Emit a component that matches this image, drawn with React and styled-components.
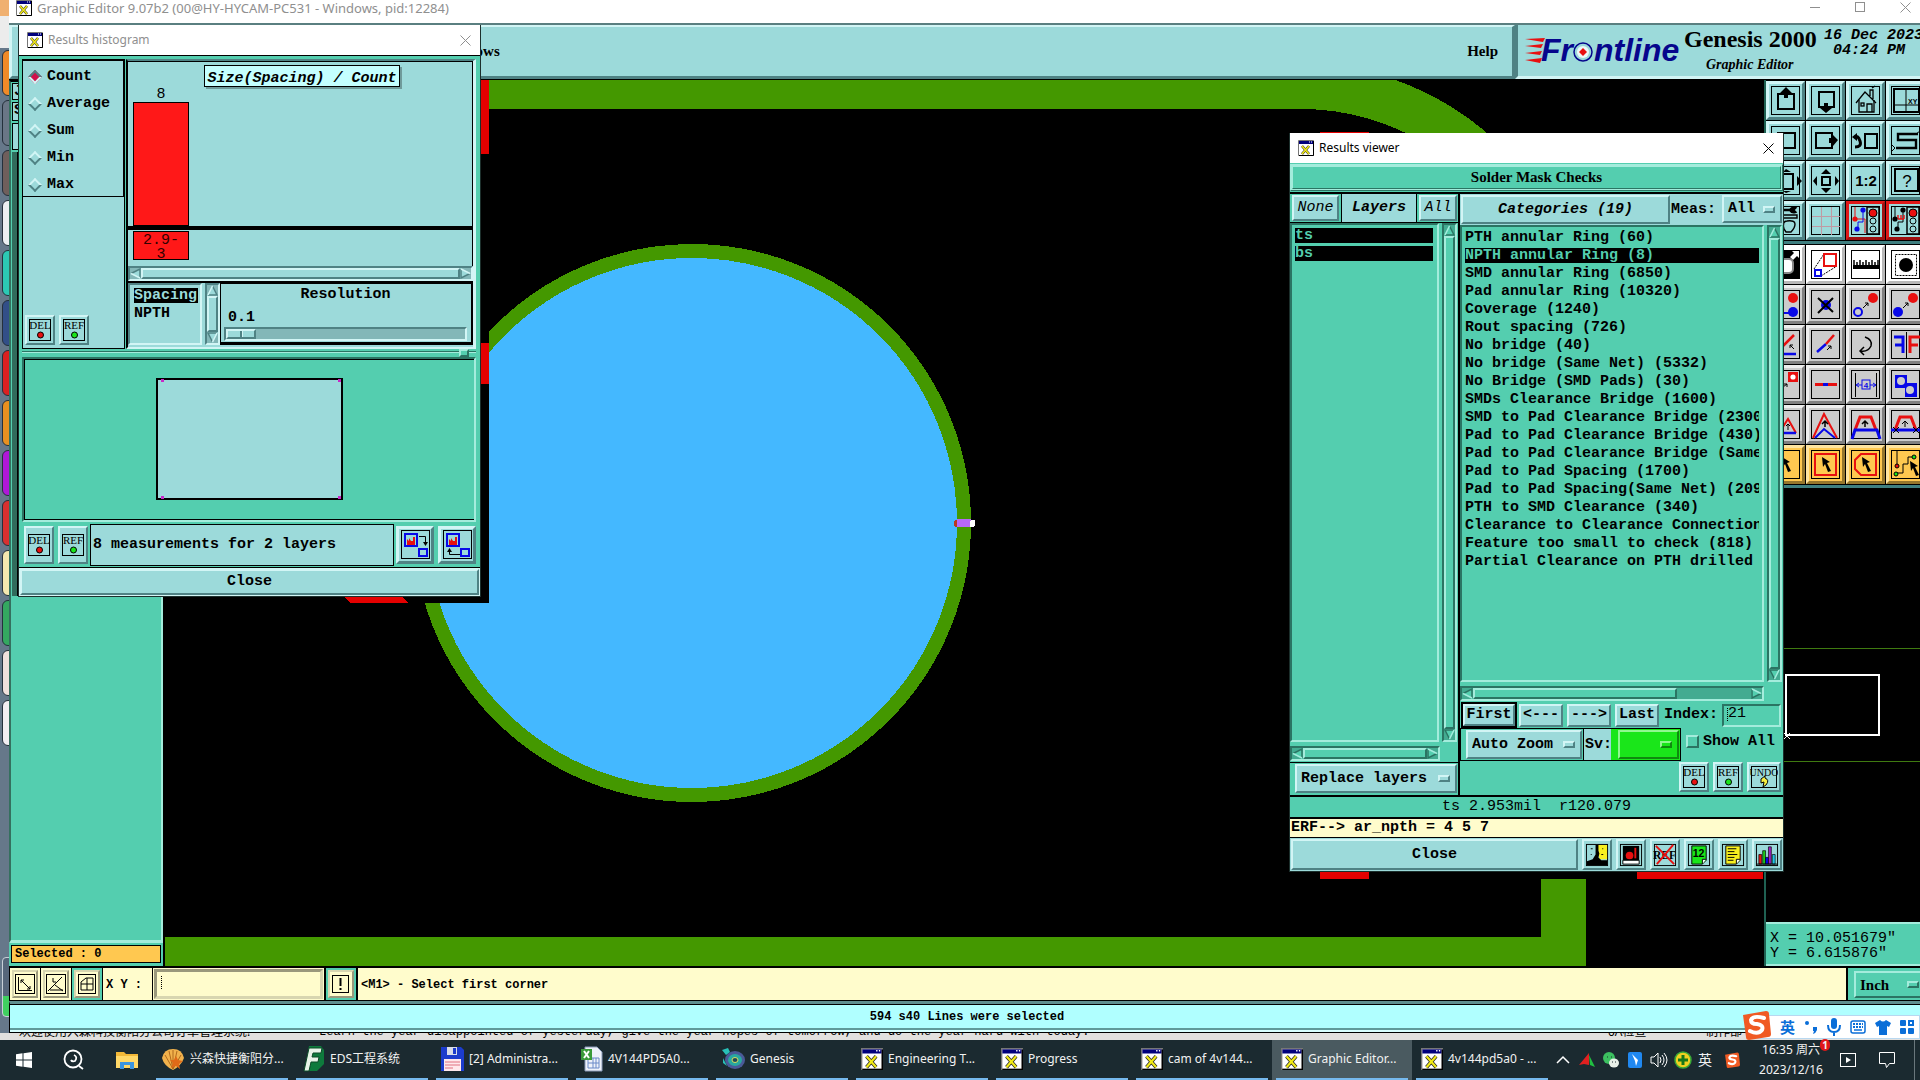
import React, { useState } from 'react';
import styled, { createGlobalStyle, css } from 'styled-components';

// Palette
const TEAL = '#54ceaf';
const TEAL_LT = '#a4ecdc';
const TEAL_DK = '#2b7463';
const AQUA = '#9cdada';
const AQUA_LT = '#d2f5f5';
const AQUA_DK = '#4f8284';
const CREAM = '#fffccc';

const MONO = '"Liberation Mono", monospace';
const SERIF = '"Liberation Serif", serif';
const UI = '"Noto Sans", "Noto Sans CJK SC", sans-serif';

const GlobalStyle = createGlobalStyle`
  *, *::before, *::after { box-sizing: border-box; }
  body { margin: 0; overflow: hidden; background: #5f6f80; }
  button, input, select { margin: 0; padding: 0; border: 0; border-radius: 0; font: inherit; color: inherit; background: none; }
  ul { margin: 0; padding: 0; list-style: none; }
  svg { display: block; }
`;

const tones = {
  teal: [TEAL, TEAL_LT, TEAL_DK],
  aqua: [AQUA, AQUA_LT, AQUA_DK],
  cream: [CREAM, '#d8d6b0', '#9a987c'],
  green: ['#1ae61a', '#90f890', '#0f8a0f'],
  white: ['#ffffff', '#ffffff', '#b8b8b8'],
  gray: ['#cccccc', '#eeeeee', '#808080'],
  orange: ['#ffc850', '#ffe4a0', '#96762c'],
  alert: [AQUA, '#e01818', '#a01010'],
};

const raised = css`
  background: ${(p) => tones[p.$tone || 'aqua'][0]};
  border: ${(p) => p.$bw || 2}px solid;
  border-color: ${(p) => {
    const [, lt, dk] = tones[p.$tone || 'aqua'];
    return `${lt} ${dk} ${dk} ${lt}`;
  }};
`;

const sunken = css`
  background: ${(p) => tones[p.$tone || 'aqua'][0]};
  border: 2px solid;
  border-color: ${(p) => {
    const [, lt, dk] = tones[p.$tone || 'aqua'];
    return `${dk} ${lt} ${lt} ${dk}`;
  }};
`;

// dotted insertion mark of an unfocused text field
const insertionMark = css`
  background-image: repeating-linear-gradient(#000 0 1px, transparent 1px 2px);
  background-size: 1px 14px;
  background-repeat: no-repeat;
`;

// ---------- Desktop ----------

const Desktop = styled.div`
  position: relative;
  display: flex;
  flex-direction: column;
  height: 100vh;
  overflow: hidden;
  font: bold 15px/18px ${MONO};
  color: #000;
`;

const Workspace = styled.div`
  flex: 1;
  display: flex;
  min-height: 0;
`;

const Dock = styled.div`
  width: 9px;
  display: flex;
  flex-direction: column;
  overflow: hidden;
  background: #66788a;
`;

const DockTop = styled.div`
  height: 48px;
  background: #ececec;
  border-top: 16px solid #f0b070;
`;

const DockIcon = styled.div`
  flex: none;
  height: 46px;
  margin: 2px 0 2px 2px;
  width: 20px;
  border: 1px solid #25303c;
  border-radius: 6px 0 0 6px;
  background: ${(p) => p.$color};
`;

const DockGauge = styled.div`
  margin: auto 0 16px 2px;
  height: 60px;
  width: 14px;
  border: 1px solid #c8d0d8;
  border-radius: 4px;
  background: linear-gradient(#56667a 66%, #40d060 66%);
`;

const MainWindow = styled.main`
  flex: 1;
  min-width: 0;
  display: flex;
  flex-direction: column;
  overflow: hidden;
  background: ${TEAL};
`;

const TitleBar = styled.header`
  display: flex;
  align-items: center;
  gap: 5px;
  height: ${(p) => p.$h}px;
  padding: 0 7px 0 8px;
  background: #fff;
  color: ${(p) => (p.$active ? '#000' : '#8f8f8f')};
  font: 12px/18px ${UI};
  white-space: nowrap;
`;

const MainTitle = styled(TitleBar)`
  padding: 0 0 8px 7px;
  font-size: 13px;

  button:last-child {
    margin-left: 5px;
  }
`;

const TitleText = styled.span`
  flex: 1;
`;

const CaptionButton = styled.button`
  width: ${(p) => p.$w || 16}px;
  display: flex;
  justify-content: center;
  color: inherit;
`;

const MenuRow = styled.div`
  display: flex;
  height: 56px;
  border-top: 2px solid #5a7f80;
  background: ${AQUA};
`;

const MenuBar = styled.nav`
  flex: 1;
  ${raised}
  border-width: 2px 3px 3px;
  display: flex;
  align-items: center;
  justify-content: space-between;
  padding: 0 14px 1px 428px;
  font: bold 15px/18px ${SERIF};
`;

const Brand = styled.div`
  width: 405px;
  flex: none;
  display: flex;
  border-left: 3px solid ${AQUA_DK};
  border-bottom: 3px solid ${AQUA_LT};
  padding-left: 4px;
  overflow: hidden;
`;

const ProductName = styled.div`
  width: 140px;
  flex: none;
  font: bold 24px/28px ${SERIF};
  white-space: nowrap;

  em {
    display: block;
    padding-left: 22px;
    font-size: 14px;
    line-height: 24px;
  }
`;

const Clock = styled.div`
  padding-top: 3px;
  font: italic bold 15px/15px ${MONO};
  white-space: pre;
`;

const Body = styled.div`
  flex: 1;
  min-height: 0;
  display: flex;
  border-top: 1px solid #000;
`;

const LayerPanel = styled.aside`
  width: 156px;
  display: flex;
  flex-direction: column;
  border-right: 2px solid #000;
  background: ${TEAL};
`;

const LayerArea = styled.div`
  flex: 1;
  border: solid;
  border-width: 2px 2px 3px;
  border-color: #000 ${TEAL_LT} ${TEAL_LT} #35705f;
  padding: 1px;
`;

const LayerBox = styled.div`
  width: 130px;
  height: ${(p) => p.$h}px;
  margin-bottom: 2px;
  padding-left: 1px;
  border: 1px solid #000;
  background: ${AQUA};
  line-height: 16px;
`;

const LayerWell = styled.div`
  width: 130px;
  height: 444px;
  border-left: 5px solid #316b5c;
  background: #000;
`;

const SelectedCount = styled.div`
  margin: 2px 2px 3px;
  height: 18px;
  padding-left: 3px;
  border: 1px solid #000;
  background: #ffc850;
  font: bold 12px/16px ${MONO};
`;

const Board = styled.div`
  flex: 1;
  min-width: 0;
  background: #000;
`;

const ToolPanel = styled.aside`
  width: 156px;
  flex: none;
  display: flex;
  flex-direction: column;
  border-left: 2px solid #1f6152;
  background: #000;
  overflow: hidden;
`;

const ToolGrid = styled.div`
  display: grid;
  grid-template-columns: repeat(4, 40px);
  grid-auto-rows: 40px;
  padding-top: 1px;
  border-bottom: 3px solid #3f7f80;
`;

const ToolButton = styled.button`
  ${raised}
  width: 39px;
  height: 39px;
`;

const Overview = styled.div`
  flex: 1;
`;

const Coordinates = styled.div`
  height: 44px;
  padding: 7px 4px 0;
  background: ${TEAL};
  border-top: 2px solid ${TEAL_LT};
  border-bottom: 2px solid ${TEAL_LT};
  font-weight: normal;
  line-height: 15px;
  white-space: pre;
`;

const CommandRow = styled.div`
  display: flex;
  height: 35px;
  border: solid #000;
  border-width: 2px 0 1px 1px;
  background: ${CREAM};
  font: bold 12px/18px ${MONO};
`;

const CommandTool = styled.div`
  width: 31px;
  flex: none;
  padding: 2px;
  border-right: 1px solid #000;
  background: ${(p) => (p.$on ? TEAL : CREAM)};
`;

const CommandButton = styled.button`
  ${raised}
  width: 26px;
  height: 28px;
  display: grid;
  place-items: center;
`;

const CommandLabel = styled.label`
  width: 49px;
  padding-left: 3px;
  line-height: 34px;
`;

const CommandField = styled.div`
  width: 174px;
  display: flex;
  padding: 1px;
  border: solid #000;
  border-width: 0 2px 0 1px;
`;

const CommandInput = styled.input`
  ${sunken}
  ${insertionMark}
  background-position: 4px 4px;
  border-width: 3px;
  flex: 1;
  min-width: 0;
  padding: 0 6px;
`;

const CommandHint = styled.div`
  flex: 1;
  padding-left: 3px;
  border: solid #000;
  border-width: 0 2px 0 1px;
  line-height: 34px;
`;

const UnitBox = styled.div`
  width: 72px;
  flex: none;
  background: ${TEAL};
  padding: 3px 0 2px 6px;
  overflow: hidden;
  font: bold 15px/18px ${SERIF};
`;

const StatusRow = styled.div`
  height: 32px;
  border: solid #000;
  border-width: 3px 0 1px 1px;
  border-top-color: #5f8f90;
  padding-bottom: 2px;
  background: #d8ffff;

  div {
    height: 26px;
    border: solid;
    border-width: 1px 0 2px;
    border-color: #000 #000 #5f9a9a;
    background: #b0ffff;
    text-align: center;
    padding-left: 4px;
    font: bold 12px/25px ${MONO};
  }
`;

const Ticker = styled.div`
  height: 7px;
  display: flex;
  padding-left: 19px;
  overflow: hidden;
  background: #e2e0de;
  font: 12px/18px ${UI};
  white-space: nowrap;

  span {
    margin-top: -10px;
  }
  span:nth-child(1) { width: 300px; }
  span:nth-child(2) { flex: 1; font-family: ${MONO}; }
  span:nth-child(3) { width: 98px; }
  span:nth-child(4) { width: 214px; }
`;

// ---------- Shared controls ----------

const FloatingWindow = styled.section`
  position: absolute;
  left: ${(p) => p.$x}px;
  top: ${(p) => p.$y}px;
  width: ${(p) => p.$w}px;
  display: flex;
  flex-direction: column;
  background: ${TEAL};
  border: solid #1c2f2c;
  border-width: 0 1px 1px;
`;

const PushButton = styled.button`
  ${raised}
  flex: ${(p) => (p.$w ? 'none' : '1')};
  width: ${(p) => (p.$w ? `${p.$w}px` : 'auto')};
  height: ${(p) => p.$h}px;
  font-style: ${(p) => (p.$italic ? 'italic' : 'normal')};
  font-weight: ${(p) => (p.$light ? 'normal' : 'bold')};
  outline: ${(p) => (p.$default ? '2px solid #000' : 'none')};
  text-align: center;
  white-space: pre;
`;

const MenuFrame = styled.span`
  ${raised}
  display: flex;
  align-items: center;
  width: ${(p) => p.$w}px;
  height: ${(p) => p.$h}px;
  padding: 0 5px 0 4px;

  select {
    appearance: none;
    flex: 1;
    min-width: 0;
    outline: none;
  }
  &::after {
    content: '';
    width: 12px;
    height: 7px;
    border: 2px solid;
    border-color: ${(p) => {
      const [, lt, dk] = tones[p.$tone || 'aqua'];
      return `${lt} ${dk} ${dk} ${lt}`;
    }};
  }
`;

const OptionMenu = ({ label, options, ...rest }) => (
  <MenuFrame {...rest}>
    <select aria-label={label}>
      {options.map((o) => (
        <option key={o}>{o}</option>
      ))}
    </select>
  </MenuFrame>
);

const Track = styled.div`
  ${sunken}
  background: ${(p) => (p.$tone === 'teal' ? '#43ab91' : '#83b7b8')};
  display: flex;
  flex-direction: ${(p) => (p.$vertical ? 'column' : 'row')};
  ${(p) => (p.$vertical ? 'width: 15px;' : 'height: 15px;')}
  flex: ${(p) => (p.$fill ? '1' : 'none')};
  min-width: 0;
`;

const Thumb = styled.div`
  ${raised}
  flex: ${(p) => p.$size};
`;

const Rest = styled.div`
  flex: ${(p) => p.$size};
`;

const Arrow = ({ dir, tone = 'aqua' }) => {
  const [, lt, dk] = tones[tone];
  const turn = { up: 0, right: 90, down: 180, left: 270 }[dir];
  return (
    <svg width="11" height="11" viewBox="0 0 11 11" style={{ flex: 'none' }}>
      <g transform={`rotate(${turn} 5.5 5.5)`}>
        <path d="M5.5 0 L11 11 H0 Z" fill={tones[tone][0]} />
        <path d="M5.5 1 L10 10 H1" fill="none" stroke={dk} strokeWidth="1.5" />
        <path d="M1 10 L5.5 1" fill="none" stroke={lt} strokeWidth="1.5" />
      </g>
    </svg>
  );
};

const ScrollBar = ({ vertical, tone, size = 1, fill }) => (
  <Track $vertical={vertical} $tone={tone} $fill={fill}>
    <Arrow dir={vertical ? 'up' : 'left'} tone={tone} />
    <Thumb $tone={tone} $size={size} />
    {size < 1 && <Rest $size={1 - size} />}
    <Arrow dir={vertical ? 'down' : 'right'} tone={tone} />
  </Track>
);

const XIcon = ({ size = 16 }) => (
  <svg width={size} height={size} viewBox="0 0 16 16">
    <path d="M.5 .5h15v15h-15z" fill="#fff" stroke="#777" />
    <path d="M1 1h14v3H1z" fill="#00007c" />
    <path d="M11 2h1M13 2h1" stroke="#fff" />
    <path d="M4 6l7 8M11 6l-7 8" stroke="#222" strokeWidth="2.6" />
    <path d="M4 6l7 8M11 6l-7 8" stroke="#f2ea18" strokeWidth="1.6" />
    <path d="M15.5 1v14.5H1" fill="none" stroke="#000" />
  </svg>
);

const CloseGlyph = () => (
  <svg width="11" height="11" viewBox="0 0 11 11">
    <path d="M.5.5l10 10M10.5.5l-10 10" stroke="currentColor" />
  </svg>
);

const TagButton = styled.button`
  ${raised}
  width: ${(p) => p.$w || 30}px;
  height: ${(p) => p.$h || 30}px;
  display: grid;
  place-items: center;
`;

const Tag = ({ text, color, h, w = 30 }) => (
  <TagButton $h={h} $w={w} aria-label={text}>
    <svg width={w - 6} height="24" viewBox={`0 0 ${w - 6} 24`}>
      <rect x="1.5" y="1.5" width={w - 9} height="21" fill={AQUA} stroke="#000" />
      <text x={(w - 6) / 2} y="11" textAnchor="middle" fontFamily="Liberation Serif" fontSize={w > 30 ? 10 : 11} fontWeight="normal">
        {text}
      </text>
      {color ? (
        <circle cx="12.5" cy="17" r="3" fill={color} stroke="#000" />
      ) : (
        <path d="M11 14l4-3v2q5 2 1 7l-3 2 1-5-3 1z" fill="#f6ee40" stroke="#000" />
      )}
    </svg>
  </TagButton>
);

// ---------- Tool icons (39 x 39 cell coordinates) ----------

const RED = '#e81010';
const BLUE = '#0808e8';
const line = { fill: 'none', stroke: '#000', strokeWidth: 2 };

const Cursor = ({ x, y }) => (
  <path transform={`translate(${x} ${y})`} d="M0 0l8 5-3 1 4 8-3 1-3-8-2 3z" fill="#000" />
);

const Lights = () => (
  <>
    <rect x="21" y="6" width="12" height="27" {...line} strokeWidth="1.5" />
    <circle cx="27" cy="12" r="4" fill={RED} stroke="#000" />
    <circle cx="27" cy="20" r="3" fill="none" stroke="#000" />
    <circle cx="27" cy="28" r="3" fill="none" stroke="#000" />
  </>
);

const navIcons = [
  <><rect x="12" y="13" width="16" height="15" {...line} /><path d="M20 6l6 6-2 2h-2v3h-4v-3h-2l-2-2z" /></>,
  <><rect x="13" y="11" width="15" height="15" {...line} /><path d="M20 32l6-5-2-2h-2v-3h-4v3h-2l-2 2z" /></>,
  <g fill="none" stroke="#000" strokeWidth="1.3"><path d="M10 22l9-11 11 11M24 15V9h3v9M26 7l3-2" /><path d="M13 19v12h15V19M21 31v-8h5v8" /><rect x="15" y="22" width="3" height="3" /></g>,
  <><rect x="8" y="8" width="25" height="23" {...line} /><path d="M20 8v23M8 24h25" fill="none" stroke="#000" /><text x="22" y="23" fontSize="7" fontFamily="Liberation Sans">XY</text></>,
  <rect x="12" y="12" width="17" height="15" {...line} />,
  <><rect x="10" y="12" width="16" height="15" {...line} /><path d="M32 19l-5-5v3h-4v5h4v3z" /></>,
  <><rect x="19" y="13" width="12" height="14" {...line} /><path d="M9 26q7 0 5-6t-5-4" {...line} strokeWidth="3" /><path d="M6 16l5-4v8z" /></>,
  <><path d="M32 13H12v6h18v8H10" {...line} strokeWidth="2.4" /><path d="M30 13l4-3M6 24l3 3-3 3" stroke="#000" fill="none" /></>,
  <><path d="M14 13h13v15H14" {...line} /><path d="M36 20l-5-5v10zM20 32l5-2h-8zM20 8l5 3h-8z" /></>,
  <><rect x="16" y="16" width="8" height="8" {...line} /><path d="M20 8l5 5H15zM20 32l5-5H15zM7 20l4-5v10zM33 20l-4-5v10z" /></>,
  <text x="20" y="25" textAnchor="middle" fontSize="15" fontWeight="bold" fontFamily="Liberation Sans">1:2</text>,
  <><rect x="9" y="8" width="23" height="22" {...line} /><text x="21" y="26" textAnchor="middle" fontSize="17" fontWeight="normal" fontFamily="Liberation Sans">?</text></>,
  <g fill="none" stroke="#000" strokeWidth="1.4"><path d="M16 9h8M24 9q2-3 5-2l-2 2 2 2q-3 1-5-2" strokeWidth="2.5" /><path d="M12 14h19v3H12" /><path d="M18 28q-2-8 3-8 8-1 8 3 0 4-4 8h-5z" /></g>,
  <path d="M15.500 6v28M25.500 6v28M6 15.500h28M6 25.500h28" stroke="#c09aa4" fill="none" />,
  <><path d="M9 6v12M9 18h10v14" stroke={RED} fill="none" /><path d="M17 9v12h-5v7" stroke={BLUE} fill="none" /><circle cx="9" cy="18" r="2.6" fill={RED} /><circle cx="17" cy="9" r="2.6" fill={BLUE} /><circle cx="11" cy="28" r="2.6" fill={BLUE} /><Lights /></>,
  <><path d="M9 6v12M17 9v12h-5v7" stroke="#000" fill="none" /><path d="M12 18h6M12 14v4M15 14v4M18 14v4" stroke={RED} strokeWidth="1.4" /><circle cx="9" cy="18" r="2.6" /><circle cx="17" cy="9" r="2.6" /><circle cx="11" cy="28" r="2.6" /><Lights /></>,
];

const editIcons = [
  ['white', <><path d="M5 5h29v29H5z" /><path d="M26 6h7v7l-2-2-4 4-3-3 4-4z" fill="#fff" /><rect x="12" y="14" width="15" height="14" rx="4" fill="#fff" stroke="#888" strokeWidth="2" /></>],
  ['white', <><path d="M8 24L18 9M15 31l16-10" stroke="#000" strokeDasharray="2 1" fill="none" /><rect x="18" y="9" width="12" height="12" fill="none" stroke={RED} strokeWidth="2" /><rect x="9" y="25" width="6" height="6" fill="none" stroke={BLUE} strokeWidth="2" /></>],
  ['white', <><path d="M7 20h26v4H7z" /><path d="M8 15v6M11 17v4M14 15v6M17 17v4M20 15v6M23 17v4M26 15v6M29 17v4M32 15v6" stroke="#000" strokeWidth="1.5" /></>],
  ['white', <><rect x="9.5" y="9.5" width="21" height="21" fill="none" stroke="#000" strokeDasharray="2 1" /><circle cx="20" cy="20" r="7" /></>],
  ['gray', <><path d="M10 28h17" stroke={BLUE} strokeWidth="2" /><circle cx="27" cy="13" r="5" fill={RED} /><circle cx="27" cy="27" r="5" fill={BLUE} /></>],
  ['gray', <><circle cx="20" cy="20" r="5" fill={BLUE} /><path d="M12 13l15 14M27 13L12 28" stroke="#000" strokeWidth="2" /></>],
  ['gray', <><circle cx="12" cy="27" r="4" fill="none" stroke={BLUE} strokeWidth="2" /><circle cx="27" cy="13" r="5" fill={RED} /><path d="M17 23l5-5m-3 0h3v3" fill="none" stroke="#000" /></>],
  ['gray', <><circle cx="12" cy="27" r="5" fill={BLUE} /><circle cx="27" cy="13" r="5" fill={RED} /><path d="M17 23l5-5m-3 0h3v3" fill="none" stroke="#000" /></>],
  ['gray', <><path d="M15 23l13-13" stroke={RED} strokeWidth="2.5" /><path d="M12 29h18" stroke={BLUE} strokeWidth="2.5" /><path d="M28 24l-4-4m0 3v-3h3" fill="none" stroke="#000" /></>],
  ['gray', <><path d="M11 27l9-8" stroke={BLUE} strokeWidth="2.5" /><path d="M20 19l8-9" stroke={RED} strokeWidth="2.5" /><path d="M21 25l4-4m-3 0h3v3" fill="none" stroke="#000" /></>],
  ['gray', <path d="M19 12q8 3 6 9-3 6-10 5m3-4l-4 4 4 4" fill="none" stroke="#000" strokeWidth="1.5" />],
  ['gray', <><path d="M8 12h9v16M17 20H9" fill="none" stroke={BLUE} strokeWidth="3" /><path d="M20.500 7v26" stroke="#000" /><path d="M34 12H24v16M24 20h8" fill="none" stroke={RED} strokeWidth="3" /></>],
  ['gray', <><path d="M22 7h10v10H22z" fill={RED} /><circle cx="27" cy="12" r="2.6" fill="#fff" /><path d="M17 22l4-3m-3 0h3v3" fill="none" stroke="#000" /></>],
  ['gray', <><path d="M9 19.500h22" stroke={RED} strokeWidth="3" /><path d="M17 19.500h5" stroke={BLUE} strokeWidth="3" /></>],
  ['gray', <><path d="M9.500 8v24M30.500 8v24" stroke="#000" /><path d="M11 20h18M13 18l-3 2 3 2M27 18l3 2-3 2" fill="none" stroke={BLUE} /><rect x="16" y="15" width="8" height="9" fill="#ccc" stroke={BLUE} /><text x="20" y="23" textAnchor="middle" fontSize="8" fill={BLUE} fontFamily="Liberation Sans">4</text></>],
  ['gray', <><path d="M9 10h12v8h10v14H19v-9H9z" fill={BLUE} /><circle cx="15" cy="16" r="4" fill="#ccc" /><circle cx="24" cy="25" r="4" fill="#ccc" /></>],
  ['gray', <><path d="M13 28l9-14 8 14" fill="none" stroke={RED} strokeWidth="2" /><path d="M13 28h17" stroke={BLUE} strokeWidth="2.5" /><path d="M22 25v-6m-2 2l2-2 2 2" fill="none" stroke="#000" /></>],
  ['gray', <><path d="M7 33L18 9l13 24" fill="none" stroke={RED} strokeWidth="2" /><path d="M9 33l9-9 11 9" fill="none" stroke={BLUE} strokeWidth="2" /><path d="M19 22v-6m-3 3l3-3 3 3" fill="none" stroke="#000" strokeWidth="1.5" /></>],
  ['gray', <><path d="M9 25l5-13h11l5 13" fill="none" stroke={RED} strokeWidth="3" /><path d="M6 34l3-9h22l3 9" fill="none" stroke={BLUE} strokeWidth="3" /><path d="M19 22v-6m-3 3l3-3 3 3" fill="none" stroke="#000" strokeWidth="1.5" /></>],
  ['gray', <><path d="M9 25l5-13h11l5 13" fill="none" stroke={RED} strokeWidth="3" /><path d="M5 25h30" stroke={BLUE} strokeWidth="3" /><path d="M7 22l6 6M13 22l-6 6M27 22l6 6M33 22l-6 6M19 22v-6m-3 3l3-3 3 3" fill="none" stroke="#000" /></>],
  ['orange', <Cursor x={16} y={12} />],
  ['orange', <><rect x="9" y="9" width="21" height="21" fill="none" stroke={RED} strokeWidth="2" /><Cursor x={16} y={12} /></>],
  ['orange', <><path d="M15 9h15v21H15l-6-6v-9z" fill="none" stroke={RED} strokeWidth="2" /><Cursor x={16} y={12} /></>],
  ['orange', <><path d="M11 6v14M10 28h7v-9h5v-7h6" fill="none" stroke="#000" /><circle cx="11" cy="21" r="2" fill={RED} stroke="#000" /><circle cx="10" cy="29" r="2" fill="#1ae61a" stroke="#000" /><circle cx="28" cy="12" r="2" fill="#1ae61a" stroke="#000" /><Cursor x={24} y={16} /></>],
];

const ToolCell = ({ tone = 'aqua', children }) => (
  <ToolButton $tone={tone} $bw={3}>
    <svg width="33" height="33" viewBox="3 3 33 33">
      <rect x="5.5" y="5.5" width="28" height="28" fill="none" stroke="#000" />
      {children}
    </svg>
  </ToolButton>
);

const FrontlineLogo = () => (
  <svg width="162" height="50" viewBox="0 0 162 50" style={{ flex: 'none' }}>
    <g fill={RED}>
      <path d="M3 14l20-1-2 4zM3 21l18-2-2 4zM3 28l17-2-2 4zM3 35l17-2-2 5z" />
    </g>
    <g fill="#06068c" fontFamily="Liberation Sans" fontWeight="bold" fontStyle="italic" fontSize="32">
      <text x="19" y="36">Fr</text>
      <text x="72" y="36">ntline</text>
    </g>
    <circle cx="61" cy="27" r="9" fill={AQUA} stroke="#06068c" strokeWidth="1.5" />
    <circle cx="61" cy="27" r="6" fill="#eef8f8" />
    <path d="M61 23l4 4-4 4-4-4z" fill={RED} />
  </svg>
);

const BoardDrawing = () => (
  <svg width="100%" height="100%" shapeRendering="crispEdges">
    <g transform="translate(-165 -80)">
      <circle cx="692" cy="523" r="272" fill="#44b8ff" stroke="#449800" strokeWidth="14" />
      <path d="M163 80h326v523H163z" fill="#000" />
      <path d="M163 64H1301A285 285 0 0 1 1586 349V982H163V937H1541V349A240 240 0 0 0 1301 109H163z" fill="#449800" />
      <path d="M481 80h8v74h-8zM481 343h8v41h-8zM342 595h58l8 8h-58zM1320 872h49v7h-49zM1637 872h126v7h-126zM1320 132h49v1h-49z" fill="#e40000" />
      <path d="M1586 349V879H1541V349z" fill="#000" />
      <rect x="954" y="520" width="6" height="7" rx="3" fill="#b83a20" />
      <rect x="957" y="519" width="14" height="8" fill="#b868f8" />
      <rect x="970" y="520" width="5" height="7" rx="2" fill="#fff" />
    </g>
  </svg>
);

// ---------- Results histogram ----------

const HistBody = styled.div`
  display: flex;
  flex-direction: column;
  border-top: 1px solid #000;
  padding: 3px 4px 0 3px;
`;

const HistTop = styled.div`
  display: flex;
  gap: 1px;
  height: 290px;
`;

const HistModes = styled.div`
  width: 103px;
  display: flex;
  flex-direction: column;
  justify-content: space-between;
  border: 1px solid #000;
  background: ${AQUA};
`;

const ModeList = styled.fieldset`
  margin: 0;
  padding: 2px 0 0 5px;
  height: 137px;
  border: 1px solid #000;
  border-width: 1px 1px 1px 0;
  min-width: 0;

  label {
    display: flex;
    align-items: center;
    gap: 7px;
    height: 27px;
  }
  input {
    appearance: none;
    width: 10px;
    height: 10px;
    margin-left: 2px;
    border: 2px solid;
    border-color: ${AQUA_LT} ${AQUA_DK} ${AQUA_DK} ${AQUA_LT};
    transform: rotate(45deg);
  }
  input:checked {
    background: #d0104c;
    border-color: ${AQUA_DK} ${AQUA_LT} ${AQUA_LT} ${AQUA_DK};
  }
`;

const TagRow = styled.div`
  display: flex;
  gap: 4px;
  padding: 0 0 3px 2px;
`;

const HistRight = styled.div`
  flex: 1;
  min-width: 0;
  border: solid;
  border-width: 2px 3px 2px 2px;
  border-color: ${AQUA_DK} ${AQUA_LT} ${AQUA_LT} #000;
  background: ${AQUA};
`;

const Plot = styled.div`
  height: 205px;
  border: 1px solid #000;
  border-left: 0;
  border-bottom: 0;
  position: relative;
  font-weight: normal;
`;

const PlotTitle = styled.div`
  position: absolute;
  left: 76px;
  top: 3px;
  width: 196px;
  height: 22px;
  border: 1px solid #000;
  box-shadow: 2px 2px 0 #6f9a9a;
  background: #c4ffff;
  text-align: center;
  font-style: italic;
  font-weight: bold;
  line-height: 25px;
`;

const Column = styled.div`
  width: 56px;
  margin-left: 5px;
  padding-top: 25px;
  text-align: center;
  line-height: 15px;
`;

const Bar = styled.div`
  height: 124px;
  border: 1px solid #000;
  background: #ff1818;
`;

const Axis = styled.div`
  height: 4px;
  background: #000;
`;

const BinLabel = styled.div`
  width: 56px;
  height: 29px;
  margin: 1px 0 0 5px;
  border: 1px solid #000;
  background: #ff1818;
  color: #300;
  text-align: center;
  line-height: 14px;
  padding: 2px 4px;
`;

const HistControls = styled.div`
  display: flex;
  height: 64px;
  border-top: 2px solid #000;
`;

const ListBox = styled.ul`
  ${sunken}
  flex: ${(p) => (p.$w ? 'none' : '1')};
  width: ${(p) => (p.$w ? `${p.$w}px` : 'auto')};
  min-width: 0;
  padding: ${(p) => p.$pad || '2px 3px'};
  overflow: hidden;
`;

const ListItem = styled.li`
  height: 18px;
  line-height: 16px;
  white-space: nowrap;
  overflow: hidden;
  color: ${(p) => (p.$on ? p.$fg || TEAL : '#000')};
  background: ${(p) => (p.$on ? '#000' : 'transparent')};
  background-clip: content-box;
  padding-bottom: 3px;
`;

const Resolution = styled.div`
  flex: 1;
  min-width: 0;
  border: solid #000;
  border-width: 1px 2px 3px 1px;
  padding: 2px 4px 0 3px;

  h4 {
    margin: 0;
    font-size: 15px;
    line-height: 18px;
    text-align: center;
  }
  output {
    display: block;
    padding: 5px 0 0 4px;
    line-height: 18px;
  }
  input {
    ${sunken}
    appearance: none;
    display: block;
    width: 100%;
    height: 14px;
    background: #83b7b8;
  }
  input::-webkit-slider-thumb {
    appearance: none;
    width: 30px;
    height: 10px;
    border: 2px solid;
    border-color: ${AQUA_LT} ${AQUA_DK} ${AQUA_DK} ${AQUA_LT};
    background: linear-gradient(90deg, ${AQUA} 45%, ${AQUA_DK} 45%, ${AQUA_DK} 52%, ${AQUA_LT} 52%, ${AQUA_LT} 58%, ${AQUA} 58%);
  }
`;

const Sash = styled.div`
  height: 8px;
  display: flex;
  justify-content: flex-end;
  padding-right: 7px;
  background: linear-gradient(transparent 2px, ${TEAL_DK} 2px, ${TEAL_DK} 3px, ${TEAL_LT} 3px, ${TEAL_LT} 4px, transparent 4px);

  i {
    width: 10px;
    height: 8px;
    border: 2px solid;
    border-color: ${TEAL_LT} ${TEAL_DK} ${TEAL_DK} ${TEAL_LT};
    background: ${TEAL};
  }
`;

const MapPanel = styled.div`
  height: 165px;
  border: 2px solid;
  border-color: ${TEAL_DK} ${TEAL_LT} ${TEAL_LT} ${TEAL_DK};
`;

const HistFooter = styled.div`
  display: flex;
  align-items: center;
  gap: 4px;
  height: 45px;
  padding-left: 2px;
`;

const Summary = styled.div`
  flex: 1;
  height: 42px;
  margin: 0 -2px;
  padding-left: 2px;
  border: 1px solid #000;
  background: ${AQUA};
  line-height: 40px;
`;

const HistClose = styled.div`
  display: flex;
  border-top: 1px solid #000;
  padding: 1px;
  background: ${AQUA_LT};
`;

const modes = ['Count', 'Average', 'Sum', 'Min', 'Max'];

const MoveIcon = ({ flip }) => (
  <svg width="31" height="31" viewBox="0 0 31 31">
    <rect x="1.5" y="1.5" width="28" height="28" fill="none" stroke="#000" />
    <rect x="5" y="5" width="12" height="12" fill={AQUA} stroke={BLUE} strokeWidth="2" />
    <path d="M7 16v-6l2 2v-3l2 3h2V8h2v8z" fill={RED} />
    <rect x="19" y="20" width="8" height="7" fill={AQUA} stroke={BLUE} strokeWidth="2" />
    <path d={flip ? 'M18 25.500H7.500V22' : 'M19 7.500h6.500V13'} fill="none" stroke="#000" />
    <path d={flip ? 'M5 23l2.500-4 2.500 4z' : 'M23 13l2.500 4 2.500-4z'} />
  </svg>
);

const ResultsHistogram = () => {
  const [mode, setMode] = useState('Count');
  const [step, setStep] = useState(0);

  return (
    <FloatingWindow $x={18} $y={25} $w={463}>
      <TitleBar $h={30}>
        <XIcon />
        <TitleText>Results histogram</TitleText>
        <CaptionButton aria-label="Close histogram"><CloseGlyph /></CaptionButton>
      </TitleBar>
      <HistBody>
        <HistTop>
          <HistModes>
            <ModeList>
              {modes.map((m) => (
                <label key={m}>
                  <input type="radio" name="mode" checked={mode === m} onChange={() => setMode(m)} />
                  {m}
                </label>
              ))}
            </ModeList>
            <TagRow>
              <Tag text="DEL" color={RED} />
              <Tag text="REF" color="#1ae61a" />
            </TagRow>
          </HistModes>
          <HistRight>
            <Plot>
              <PlotTitle>Size(Spacing) / Count</PlotTitle>
              <Column>
                8
                <Bar />
              </Column>
              <Axis />
              <BinLabel>2.9-<br />3</BinLabel>
            </Plot>
            <ScrollBar />
            <HistControls>
              <ListBox $w={74} $pad="3px 2px 3px 4px">
                <ListItem $on $fg={AQUA}>Spacing</ListItem>
                <ListItem>NPTH</ListItem>
              </ListBox>
              <Rest $size="0 0 3px" />
              <ScrollBar vertical />
              <Resolution>
                <h4>Resolution</h4>
                <output>0.1</output>
                <input type="range" aria-label="Resolution" min="0" max="20" value={step} onChange={(e) => setStep(e.target.value)} />
              </Resolution>
            </HistControls>
          </HistRight>
        </HistTop>
        <Sash><i /></Sash>
        <MapPanel>
          <svg width="100%" height="100%" shapeRendering="crispEdges">
            <rect x=".5" y=".5" width="450" height="160" fill="none" stroke="#000" />
            <rect x="133" y="20" width="185" height="120" fill={AQUA} stroke="#000" strokeWidth="2" />
            <path d="M137 20h3v3h-3zM314 20h3v3h-3zM137 137h3v3h-3zM314 137h3v3h-3z" fill="#c828c8" />
          </svg>
        </MapPanel>
        <HistFooter>
          <Tag text="DEL" color={RED} h={38} />
          <Tag text="REF" color="#1ae61a" h={38} />
          <Summary>8 measurements for 2 layers</Summary>
          <TagButton $w={38} $h={38} $bw={3} aria-label="Next"><MoveIcon /></TagButton>
          <TagButton $w={38} $h={38} $bw={3} aria-label="Previous"><MoveIcon flip /></TagButton>
        </HistFooter>
      </HistBody>
      <HistClose>
        <PushButton $h={26}>Close</PushButton>
      </HistClose>
    </FloatingWindow>
  );
};

// ---------- Results viewer ----------

const Banner = styled.div`
  ${raised}
  height: 27px;
  border-width: 3px;
  outline: 1px solid ${TEAL_LT};
  outline-offset: -2px;
  text-align: center;
  font: bold 15px/21px ${SERIF};
  margin: 1px 0;
`;

const Panes = styled.div`
  display: flex;
  border-top: 2px solid #000;
  border-bottom: 2px solid #000;
  height: 605px;
`;

const LayersPane = styled.div`
  width: 170px;
  display: flex;
  flex-direction: column;
  border-right: 2px solid #000;
`;

const CategoriesPane = styled.div`
  flex: 1;
  min-width: 0;
  display: flex;
  flex-direction: column;
`;

const LayersHead = styled.div`
  display: flex;
  height: 29px;
  padding: 1px 1px 1px 2px;
  border-bottom: 1px solid #000;

  strong {
    flex: 1;
    margin: -1px 2px;
    border: solid #000;
    border-width: 0 1px;
    background: ${AQUA};
    text-align: center;
    font-style: italic;
    line-height: 27px;
  }
`;

const CategoriesHead = styled.div`
  display: flex;
  height: 31px;
  padding: 1px;
  background: ${AQUA};

  label {
    width: 52px;
    padding-left: 1px;
    line-height: 29px;
    white-space: nowrap;
  }
`;

const ListRow = styled.div`
  flex: 1;
  min-height: 0;
  display: flex;
  gap: 3px;
  padding-right: 1px;
`;

const ScrollRow = styled.div`
  display: flex;
  padding: 4px ${(p) => p.$end}px 1px 0;
`;

const ReplaceBox = styled.div`
  height: 33px;
  border-top: 1px solid #000;
  padding: 1px 1px 2px 5px;
`;

const NavRow = styled.div`
  display: flex;
  align-items: center;
  gap: 4px;
  height: 26px;
  padding: 0 2px 0 3px;
  white-space: nowrap;

  label {
    width: 55px;
    padding-left: 1px;
  }
`;

const IndexInput = styled.input`
  ${sunken}
  ${insertionMark}
  background-position: 3px 2px;
  flex: 1;
  min-width: 0;
  height: 23px;
  padding: 0 4px 4px;
  font-weight: normal;
`;

const ZoomRow = styled.div`
  display: flex;
  height: 33px;
  white-space: nowrap;
`;

const ZoomBox = styled.div`
  padding: 1px 1px 1px 5px;
  border: 1px solid #000;
`;

const SaveBox = styled.label`
  display: flex;
  border: 1px solid #000;
  border-left: 0;
  background: linear-gradient(90deg, ${AQUA} 27px, #1ae61a 27px);
  line-height: 30px;
  padding: 1px;

  > span:first-child { width: 33px; }
`;

const ShowAll = styled.label`
  display: flex;
  align-items: center;
  gap: 4px;
  height: 27px;
  padding-left: 5px;

  input {
    appearance: none;
    width: 13px;
    height: 13px;
    border: 2px solid;
    border-color: ${TEAL_LT} ${TEAL_DK} ${TEAL_DK} ${TEAL_LT};
  }
`;

const ViewerTags = styled.div`
  display: flex;
  justify-content: flex-end;
  gap: 4px;
  height: 34px;
  padding: 1px 2px;
`;

const Measure = styled.div`
  height: 20px;
  text-align: center;
  white-space: pre;
  font-weight: normal;
  line-height: 20px;
`;

const Erf = styled.div`
  height: 21px;
  border: solid #000;
  border-width: 2px 0 1px;
  background: ${CREAM};
  padding-left: 1px;
  line-height: 17px;
  white-space: pre;
`;

const ViewerFooter = styled.div`
  display: flex;
  gap: 4px;
  padding: 1px;
  background: ${AQUA};
`;

const categories = [
  'PTH annular Ring (60)',
  'NPTH annular Ring (8)',
  'SMD annular Ring (6850)',
  'Pad annular Ring (10320)',
  'Coverage (1240)',
  'Rout spacing (726)',
  'No bridge (40)',
  'No bridge (Same Net) (5332)',
  'No Bridge (SMD Pads) (30)',
  'SMDs Clearance Bridge (1600)',
  'SMD to Pad Clearance Bridge (2300)',
  'Pad to Pad Clearance Bridge (430)',
  'Pad to Pad Clearance Bridge (Same Net)',
  'Pad to Pad Spacing (1700)',
  'Pad to Pad Spacing(Same Net) (209)',
  'PTH to SMD Clearance (340)',
  'Clearance to Clearance Connection',
  'Feature too small to check (818)',
  'Partial Clearance on PTH drilled',
];

const viewerIcons = [
  ['Faces', <><path d="M13 2h10v15h-8z" fill="#f8f020" /><path d="M11 2h3v6l1 3-1 4 3 3h6v5H2v-4l6-2 3-5z" /><path d="M6 6h2M6 12h1M18 6h1M17 12h2" stroke="#000" /></>],
  ['Record', <><path d="M4 3h17v15H4z" /><circle cx="11" cy="13" r="4" fill={RED} /><path d="M17 5v11" stroke={RED} strokeWidth="2" /><path d="M4 18h17v4H4z" fill="#fff" stroke="#000" /></>],
  ['Clear reference', <><text x="12" y="17" textAnchor="middle" fontSize="12" fontFamily="Liberation Serif">REF</text><path d="M3 3l19 19M21 2L4 22" stroke={RED} strokeWidth="2" /></>],
  ['Pages', <><path d="M5 3h15v15l-4 4H5z" fill="#1ae61a" stroke="#000" /><text x="12" y="15" textAnchor="middle" fontSize="11" fontFamily="Liberation Sans" fontWeight="bold">12</text><path d="M20 17h-4v5" fill="#fff" stroke="#000" /></>],
  ['Notes', <><path d="M5 3h15v15l-4 4H5z" fill="#f8f020" stroke="#000" /><path d="M7 6h9M7 9h7M7 12h10M7 15h7M7 18h6" stroke="#000" /><path d="M20 17h-4v5" fill="#fff" stroke="#000" /></>],
  ['Chart', <><g stroke="#000" strokeWidth=".7"><path d="M4 12h3v10H4z" fill={RED} /><path d="M8 8h3v14H8z" fill="#1ac81a" /><path d="M11 15h3v7h-3z" fill={BLUE} /><path d="M14 4h3v18h-3z" fill="#a020c0" /><path d="M18 12h3v10h-3z" fill="#20c8e8" /></g><path d="M2 22h21" stroke="#000" /></>],
];

const ResultsViewer = () => {
  const [current, setCurrent] = useState(1);
  const [showAll, setShowAll] = useState(false);

  return (
    <FloatingWindow $x={1289} $y={133} $w={495}>
      <TitleBar $h={30} $active>
        <XIcon />
        <TitleText>Results viewer</TitleText>
        <CaptionButton aria-label="Close viewer"><CloseGlyph /></CaptionButton>
      </TitleBar>
      <Banner $tone="teal">Solder Mask Checks</Banner>
      <Panes>
        <LayersPane>
          <LayersHead>
            <PushButton $w={47} $h={26} $italic $light>None</PushButton>
            <strong>Layers</strong>
            <PushButton $w={38} $h={26} $italic $light>All</PushButton>
          </LayersHead>
          <ListRow>
            <ListBox $tone="teal" $pad="3px 4px 0 3px" role="listbox" aria-label="Layers">
              <ListItem $on role="option">ts</ListItem>
              <ListItem $on role="option">bs</ListItem>
            </ListBox>
            <ScrollBar vertical tone="teal" />
          </ListRow>
          <ScrollRow $end={18}><ScrollBar tone="teal" fill /></ScrollRow>
          <ReplaceBox>
            <OptionMenu label="Replace mode" $w={162} $h={29} options={['Replace layers', 'Add layers']} />
          </ReplaceBox>
        </LayersPane>
        <CategoriesPane>
          <CategoriesHead>
            <PushButton $h={29} $italic>Categories (19)</PushButton>
            <label>Meas:</label>
            <OptionMenu label="Measurements" $w={60} $h={28} options={['All', 'Red']} />
          </CategoriesHead>
          <ListRow>
            <ListBox $tone="teal" $pad="3px 3px 0" role="listbox" aria-label="Categories">
              {categories.map((c, i) => (
                <ListItem key={c} role="option" $on={i === current} onClick={() => setCurrent(i)}>{c}</ListItem>
              ))}
            </ListBox>
            <ScrollBar vertical tone="teal" />
          </ListRow>
          <ScrollRow $end={19}><ScrollBar tone="teal" size={0.73} fill /></ScrollRow>
          <NavRow>
            <PushButton $w={52} $h={22} $default>First</PushButton>
            <PushButton $w={44} $h={23}>{'<---'}</PushButton>
            <PushButton $w={44} $h={23}>{'--->'}</PushButton>
            <PushButton $w={44} $h={23}>Last</PushButton>
            <label htmlFor="index">Index:</label>
            <IndexInput id="index" $tone="teal" defaultValue="21" />
          </NavRow>
          <ZoomRow>
            <ZoomBox>
              <OptionMenu label="Zoom mode" $w={116} $h={29} options={['Auto Zoom', 'No Zoom']} />
            </ZoomBox>
            <SaveBox>
              <span>Sv:</span>
              <OptionMenu label="Severity" $w={61} $h={29} $tone="green" options={['']} />
            </SaveBox>
            <ShowAll>
              <input type="checkbox" checked={showAll} onChange={() => setShowAll(!showAll)} />
              Show All
            </ShowAll>
          </ZoomRow>
          <ViewerTags>
            <Tag text="DEL" color={RED} />
            <Tag text="REF" color="#1ae61a" />
            <Tag text="UNDO" w={34} />
          </ViewerTags>
        </CategoriesPane>
      </Panes>
      <Measure>ts 2.953mil  r120.079</Measure>
      <Erf>{'ERF--> ar_npth = 4 5 7'}</Erf>
      <ViewerFooter>
        <PushButton $h={31}>Close</PushButton>
        {viewerIcons.map(([name, art]) => (
          <TagButton key={name} $h={31} aria-label={name}>
            <svg width="24" height="24" viewBox="0 0 25 25">
              <rect x="1.5" y="1.5" width="22" height="22" fill="none" stroke="#000" />
              {art}
            </svg>
          </TagButton>
        ))}
      </ViewerFooter>
    </FloatingWindow>
  );
};

// ---------- Taskbar ----------

const Taskbar = styled.footer`
  height: 40px;
  display: flex;
  align-items: center;
  background: #1b2a30;
  color: #f2f2f2;
  font: 12px/18px ${UI};
`;

const Shortcut = styled.button`
  width: ${(p) => p.$w}px;
  height: 40px;
  display: grid;
  place-items: center;
`;

const Task = styled.button`
  width: 140px;
  height: 40px;
  flex: none;
  padding: 0 4px;
  background: ${(p) => (p.$active ? '#4a5a60' : 'transparent')};

  > span {
    display: flex;
    align-items: center;
    gap: 5px;
    height: 40px;
    padding-left: 5px;
    border-bottom: 2px solid #76b9ed;
    white-space: nowrap;
    overflow: hidden;
  }
`;

const Tray = styled.div`
  margin-left: auto;
  display: flex;
  align-items: center;

  > svg { margin-right: 6px; }
`;

const TrayLang = styled.span`
  font-size: 14px;
  margin-right: 12px;
`;

const TrayClock = styled.time`
  position: relative;
  width: 90px;
  text-align: center;
  line-height: 20px;
  white-space: nowrap;

  b {
    position: absolute;
    right: 6px;
    top: -1px;
    width: 10px;
    height: 12px;
    border-radius: 6px;
    background: #e01818;
    font-size: 10px;
    line-height: 12px;
  }
`;

const Corner = styled.div`
  width: 6px;
  height: 40px;
  border-left: 1px solid #6a777c;
`;

const ImeBar = styled.div`
  position: absolute;
  right: 0;
  bottom: 41px;
  width: 163px;
  height: 24px;
  display: flex;
  align-items: center;
  justify-content: space-between;
  padding: 0 5px 0 22px;
  border: 1px solid #b8d8f0;
  background: #fff;
  color: #0a6ed8;
  font: bold 15px/20px "Noto Sans CJK SC", sans-serif;
`;

const ImeLogo = styled.div`
  position: absolute;
  left: -17px;
  top: -6px;
`;

const SogouMark = ({ size }) => (
  <svg width={size} height={size} viewBox="0 0 30 30">
    <path d="M2 5L25 1q3 0 3 3l2 20q0 3-3 3L8 30q-3 0-3-3z" fill="#f05a23" />
    <path d="M23 8q-11-3-13 2 0 4 6 4 7 1 5 6-4 5-12 1" fill="none" stroke="#fff" strokeWidth="4" strokeLinecap="round" />
  </svg>
);

const Shell = () => (
  <svg width="24" height="24" viewBox="0 0 24 24">
    <path d="M12 2q9 0 11 9-3 8-11 12Q3 19 1 11 3 2 12 2z" fill="#f2b24c" />
    <path d="M12 22L4 8M12 22L8 4M12 22L12 3M12 22L16 4M12 22l8-14" stroke="#b06a1c" />
    <path d="M15 9l2 4 5 1-4 3 1 5-4-3-5 2 2-5-3-3h4z" fill="#e06a18" />
  </svg>
);

const EdsIcon = () => (
  <svg width="24" height="28" viewBox="0 0 24 28">
    <path d="M8 1h12l3 4v14l-7 7H4z" fill="#0e7a3c" />
    <path d="M3 26L8 3h13l-1 5h-8l-1 4h7l-1 5h-7l-2 9z" fill="#e8f4e8" stroke="#0a4a26" />
  </svg>
);

const Floppy = () => (
  <svg width="23" height="24" viewBox="0 0 23 24">
    <path d="M0 0h20l3 3v21H0z" fill="#1c3ccc" />
    <path d="M6 0h10v8H6z" fill="#d8dce8" />
    <path d="M12 1h3v6h-3z" fill="#1c3ccc" />
    <path d="M3 12h17v12H3z" fill="#ffe8ec" />
    <path d="M4 15h15M4 18h15M4 21h8" stroke="#e07080" />
  </svg>
);

const Sheet = () => (
  <svg width="22" height="26" viewBox="0 0 22 26">
    <path d="M4 1h12l5 5v19H4z" fill="#eef2fa" stroke="#8a9ab8" />
    <path d="M7 12h11v10H7zM7 17h11M12 12v10M15 12v10" fill="none" stroke="#6a8ac8" />
    <path d="M0 3h11v11H0z" fill="#3a9a3a" />
    <path d="M3 5l5 7M8 5l-5 7" stroke="#fff" strokeWidth="2" />
  </svg>
);

const GenesisIcon = () => (
  <svg width="24" height="22" viewBox="0 0 24 22">
    <ellipse cx="14" cy="12" rx="10" ry="9" fill="#4a5a98" />
    <ellipse cx="14" cy="12" rx="7" ry="6" fill="#28a8a0" />
    <ellipse cx="14" cy="12" rx="3" ry="2.500" fill="#204858" stroke="#d8e060" />
    <path d="M1 2l6-2 2 4-4 3zM2 10l4 8-4-3z" fill="#28c0b8" />
  </svg>
);

const tasks = [
  ['兴森快捷衡阳分...', <Shell />],
  ['EDS工程系统', <EdsIcon />],
  ['[2] Administra...', <Floppy />],
  ['4V144PD5A0...', <Sheet />],
  ['Genesis', <GenesisIcon />],
  ['Engineering T...', <XIcon size={22} />],
  ['Progress', <XIcon size={22} />],
  ['cam of 4v144...', <XIcon size={22} />],
  ['Graphic Editor...', <XIcon size={22} />],
  ['4v144pd5a0 - ...', <XIcon size={22} />],
];

const SystemTaskbar = () => (
  <Taskbar>
    <Shortcut $w={47} aria-label="Start">
      <svg width="16" height="16" viewBox="0 0 16 16" fill="#fff"><path d="M0 2.300l6.500-1v6.200H0zM7.500 1.200L16 0v7.500H7.500zM0 8.500h6.500v6.200l-6.500-1zM7.500 8.500H16V16l-8.500-1.200z" /></svg>
    </Shortcut>
    <Shortcut $w={54} aria-label="Search">
      <svg width="22" height="22" viewBox="0 0 22 22" fill="none" stroke="#fff" strokeWidth="1.8"><circle cx="10" cy="10" r="8.500" /><path d="M16 17l4 3M11 6q4 2 1 6-3 1-4-1" /></svg>
    </Shortcut>
    <Shortcut $w={51} aria-label="Files">
      <svg width="22" height="18" viewBox="0 0 22 18"><path d="M0 1h8l2 2h12v14H0z" fill="#f2b838" /><path d="M0 5h22v12H0z" fill="#ffd868" /><path d="M4 18v-7h14v7h-4v-4H8v4z" fill="#3a94e0" /></svg>
    </Shortcut>
    {tasks.map(([name, icon], i) => (
      <Task key={name} $active={i === 8}>
        <span>{icon}{name}</span>
      </Task>
    ))}
    <Tray>
      <svg width="18" height="18" viewBox="0 0 18 18"><path d="M3 12l6-6 6 6" fill="none" stroke="#fff" strokeWidth="1.500" /></svg>
      <svg width="18" height="18" viewBox="0 0 18 18"><path d="M1 14L11 2v12l-5-1z" fill="#e02020" /><path d="M11 4l6 12-5-2z" fill="#20c040" /></svg>
      <svg width="18" height="18" viewBox="0 0 18 18"><circle cx="7" cy="7" r="6" fill="#3cc060" /><ellipse cx="12" cy="12" rx="5" ry="4.500" fill="#e8f0e8" /><path d="M5 6h1M9 6h1M10 11h1M13 11h1" stroke="#1b2a30" /></svg>
      <svg width="18" height="18" viewBox="0 0 18 18"><rect x="2" y="1" width="14" height="16" rx="2" fill="#2088f0" /><path d="M6 3l6 6-2 6-1-5z" fill="#fff" /></svg>
      <svg width="18" height="18" viewBox="0 0 18 18" fill="none" stroke="#fff"><path d="M1 6h3l4-4v14l-4-4H1zM10 6q2 3 0 6M12 4q4 5 0 10M14 2q6 7 0 14" /></svg>
      <svg width="18" height="18" viewBox="0 0 18 18"><circle cx="9" cy="9" r="8" fill="#f0d020" stroke="#38a838" strokeWidth="1.500" /><path d="M9 4v10M4 9h10" stroke="#187818" strokeWidth="3" /></svg>
      <TrayLang>英</TrayLang>
      <SogouMark size={16} />
      <TrayClock>16:35 周六<b>1</b><br />2023/12/16</TrayClock>
      <Shortcut $w={24} aria-label="Media">
        <svg width="16" height="14" viewBox="0 0 16 14"><rect x=".500" y=".500" width="15" height="13" fill="none" stroke="#fff" /><path d="M6 4l5 3-5 3z" fill="#fff" /></svg>
      </Shortcut>
      <Shortcut $w={54} aria-label="Notifications">
        <svg width="16" height="17" viewBox="0 0 16 17"><path d="M.500 .500h15v11h-5l-3 4-1-4h-6z" fill="none" stroke="#fff" /></svg>
      </Shortcut>
      <Corner />
    </Tray>
  </Taskbar>
);

const dockColors = ['#f08a28', '#6a7686', '#6f5f5c', '#eceff2', '#2cc8b4', '#324f88', '#dc2020', '#e89020', '#b018d8', '#d83030', '#f4e8b0', '#34a860', '#f0e0dc', '#f2eef2'];

const App = () => (
  <Desktop>
    <GlobalStyle />
    <Workspace>
      <Dock>
        <DockTop />
        {dockColors.map((c, i) => (
          <DockIcon key={i} $color={c} />
        ))}
        <DockGauge />
      </Dock>
      <MainWindow>
        <MainTitle $h={23}>
          <XIcon />
          <TitleText>Graphic Editor 9.07b2 (00@HY-HYCAM-PC531 - Windows, pid:12284)</TitleText>
          <CaptionButton $w={40} aria-label="Minimize"><svg width="10" height="11"><path d="M0 5.500h10" stroke="currentColor" /></svg></CaptionButton>
          <CaptionButton $w={40} aria-label="Maximize"><svg width="10" height="11"><rect x=".500" y=".500" width="9" height="9" fill="none" stroke="currentColor" /></svg></CaptionButton>
          <CaptionButton $w={30} aria-label="Close"><CloseGlyph /></CaptionButton>
        </MainTitle>
        <MenuRow>
          <MenuBar>
            <span>Windows</span>
            <span>Help</span>
          </MenuBar>
          <Brand>
            <FrontlineLogo />
            <ProductName>Genesis 2000<em>Graphic Editor</em></ProductName>
            <Clock>{'16 Dec 2023\n 04:24 PM'}</Clock>
          </Brand>
        </MenuRow>
        <Body>
          <LayerPanel>
            <LayerArea>
              <LayerBox $h={17}>J</LayerBox>
              <LayerBox $h={19}>S</LayerBox>
              <LayerBox $h={27} />
              <LayerWell />
            </LayerArea>
            <SelectedCount>Selected : 0</SelectedCount>
          </LayerPanel>
          <Board><BoardDrawing /></Board>
          <ToolPanel>
            <ToolGrid>
              {navIcons.map((art, i) => (
                <ToolCell key={i} tone={i > 13 ? 'alert' : 'aqua'}>{art}</ToolCell>
              ))}
            </ToolGrid>
            <ToolGrid>
              {editIcons.map(([tone, art], i) => (
                <ToolCell key={i} tone={tone}>{art}</ToolCell>
              ))}
            </ToolGrid>
            <Overview>
              <svg width="100%" height="100%" shapeRendering="crispEdges">
                <path d="M0 160h154M0 273h154" stroke="#3f7a10" />
                <rect x="20" y="187" width="93" height="60" fill="none" stroke="#fff" strokeWidth="2" />
                <path d="M18 245l6 6M24 245l-6 6" stroke="#fff" />
              </svg>
            </Overview>
            <Coordinates>{'X = 10.051679"\nY = 6.615876"'}</Coordinates>
          </ToolPanel>
        </Body>
        <CommandRow>
          <CommandTool>
            <CommandButton $tone="cream" aria-label="Snap">
              <svg width="20" height="22" viewBox="0 0 20 22" fill="none" stroke="#000"><rect x=".500" y="1.500" width="19" height="19" /><path d="M3.500 4v13.500H17M6 7l9 9M6 10V7h3M15 13v3h-3" /></svg>
            </CommandButton>
          </CommandTool>
          <CommandTool>
            <CommandButton $tone="cream" aria-label="Angle">
              <svg width="20" height="22" viewBox="0 0 20 22" fill="none" stroke="#000"><rect x=".500" y="1.500" width="19" height="19" /><path d="M2 18L16 4M4 17h13M7 5v4h3M9 12l8 6" /></svg>
            </CommandButton>
          </CommandTool>
          <CommandTool $on>
            <CommandButton $tone="cream" aria-label="Grid">
              <svg width="20" height="22" viewBox="0 0 20 22" fill="none" stroke="#000"><rect x="1.500" y="1.500" width="17" height="19" /><path d="M4 9l5-4h7v12H4zM10 5v12M4 11h12" /></svg>
            </CommandButton>
          </CommandTool>
          <CommandLabel htmlFor="xy">X Y :</CommandLabel>
          <CommandField>
            <CommandInput id="xy" $tone="cream" />
          </CommandField>
          <CommandTool $on>
            <CommandButton $tone="cream" aria-label="Alert">
              <svg width="20" height="22" viewBox="0 0 20 22" fill="none" stroke="#000"><rect x="1.500" y="2.500" width="16" height="17" /><path d="M9.500 5v8M9.500 15v2" strokeWidth="2" /></svg>
            </CommandButton>
          </CommandTool>
          <CommandHint>{'<M1> - Select first corner'}</CommandHint>
          <UnitBox>
            <OptionMenu label="Units" $tone="teal" $w={72} $h={27} options={['Inch', 'MM']} />
          </UnitBox>
        </CommandRow>
        <StatusRow><div>594 s40 Lines were selected</div></StatusRow>
      </MainWindow>
    </Workspace>
    <Ticker>
      <span>欢迎使用兴森科技衡阳分公司订单管理系统!</span>
      <span>Learn the year disappointed of yesterday, give the year hopes of tomorrow, and do the year hard with today.</span>
      <span>0A检查</span>
      <span>制作部</span>
    </Ticker>
    <SystemTaskbar />
    <ImeBar>
      <ImeLogo><SogouMark size={30} /></ImeLogo>
      <span>英</span>
      <svg width="14" height="16" viewBox="0 0 14 16" fill="#0a6ed8"><circle cx="3" cy="4" r="2" /><path d="M9 8h4v3q-1 3-4 4l1-3H9z" /></svg>
      <svg width="14" height="18" viewBox="0 0 14 18"><rect x="4" y="0" width="6" height="11" rx="3" fill="#0a6ed8" /><path d="M1 7q0 7 6 7t6-7M7 14v4" fill="none" stroke="#0a6ed8" strokeWidth="2" /></svg>
      <svg width="16" height="14" viewBox="0 0 16 14"><rect x="1" y="1" width="14" height="12" rx="2" fill="none" stroke="#0a6ed8" strokeWidth="1.500" /><path d="M3 4h10M3 7h10" stroke="#0a6ed8" strokeWidth="2" strokeDasharray="2 1" /><path d="M4 10h8" stroke="#0a6ed8" strokeWidth="1.500" /></svg>
      <svg width="16" height="16" viewBox="0 0 16 16"><path d="M5 1q3 3 6 0l5 3-2 4-2-1v9H4V7L2 8 0 4z" fill="#0a6ed8" /></svg>
      <svg width="14" height="16" viewBox="0 0 14 16" fill="#0a6ed8"><rect y="1" width="6" height="6" rx="1" /><rect x="9" y="2" width="4" height="4" fill="none" stroke="#0a6ed8" strokeWidth="2" /><rect y="9" width="6" height="6" rx="1" /><rect x="8" y="9" width="6" height="6" rx="1" /></svg>
    </ImeBar>
    <ResultsHistogram />
    <ResultsViewer />
  </Desktop>
);

export default App;
